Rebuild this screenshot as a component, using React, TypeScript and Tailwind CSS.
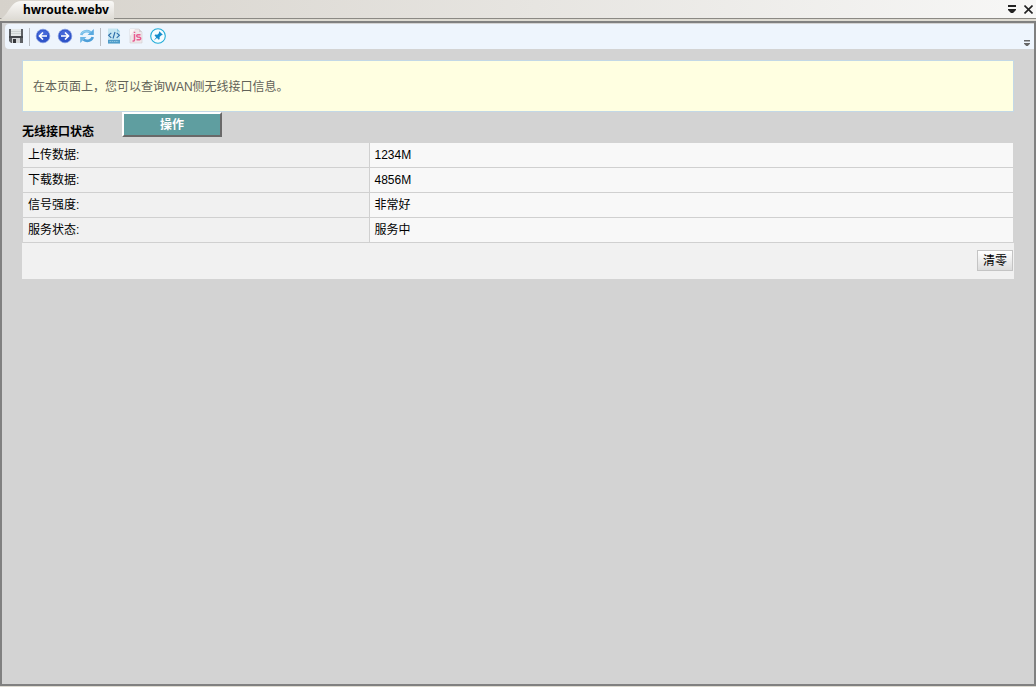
import type { ReactNode } from "react";

const rows = [
  { label: "上传数据:", value: "1234M" },
  { label: "下载数据:", value: "4856M" },
  { label: "信号强度:", value: "非常好" },
  { label: "服务状态:", value: "服务中" },
];

function SaveIcon() {
  return (
    <svg viewBox="0 0 16 16" className="w-4 h-4">
      <path d="M1 1h14v14H3l-2-2z" fill="#5d6064" />
      <path d="M3 1h10v7H3z" fill="#e4e8e8" />
      <path d="M3 3h10v1H3zM3 5h10v1H3z" fill="#cdd3d2" />
      <path d="M1 8h14v2H1z" fill="#43464a" />
      <path d="M4 10h8v5H4z" fill="#d2d5d7" />
      <path d="M5 11h3v4H5z" fill="#34363a" />
    </svg>
  );
}

function ArrowIcon({ forward }: { forward?: boolean }) {
  return (
    <svg viewBox="0 0 16 16" className="w-4 h-4">
      <circle cx="8" cy="8" r="6.8" fill="#2f54c9" stroke="#7e97df" strokeWidth="0.7" />
      <path d="M2.5 7a5.6 5.6 0 0 1 11 0q-5.500 2-11 0z" fill="#4467d8" />
      <path
        d={forward ? "M4 8h7M8 4.500l3.500 3.500L8 11.500" : "M12 8H5M8 4.500L4.500 8L8 11.500"}
        fill="none"
        stroke="#fff"
        strokeWidth="1.7"
      />
    </svg>
  );
}

function RefreshIcon() {
  return (
    <svg viewBox="0 0 16 16" className="w-4 h-4">
      <path d="M2.300 7C3 3.800 7.500 1.800 11.500 4.300" fill="none" stroke="#72bbe8" strokeWidth="2.600" />
      <path d="M14.800 1v6H8.600z" fill="#5aaae0" />
      <path d="M13.700 9C13 12.200 8.500 14.200 4.500 11.700" fill="none" stroke="#4d9fd9" strokeWidth="2.600" />
      <path d="M1.200 15V9h6.200z" fill="#6cb6e6" />
      <path d="M2.600 5.500C4.500 2.900 8 2.500 10.500 3.800" fill="none" stroke="#b2dcf4" strokeWidth="0.7" />
    </svg>
  );
}

function HtmlIcon() {
  return (
    <svg viewBox="0 0 16 16" className="w-4 h-4">
      <path d="M2 .5h9l3 3v12H2z" fill="#c5e6f2" />
      <path d="M11 .5v3h3z" fill="#8fc8e2" />
      <path d="M5.300 4.800L2.600 7.300l2.700 2.500M10.700 4.800l2.700 2.500-2.700 2.500M9 4L7 10.500" fill="none" stroke="#2b6ca8" strokeWidth="1.100" />
      <path d="M2 11.800h12V15.500H2z" fill="#4d9bc9" />
      <path d="M3.500 13.500h9" stroke="#8cc3df" strokeWidth="1" strokeDasharray="1.500 0.700" />
    </svg>
  );
}

function ScriptIcon() {
  return (
    <svg viewBox="0 0 16 16" className="w-4 h-4">
      <path d="M2 1h9l3 3v11H2z" fill="#efe7ea" stroke="#d2ced1" strokeWidth="0.6" />
      <path d="M11 1v3h3z" fill="#d5cdd1" />
      <path d="M2 1h5L2 8z" fill="#faf6f7" />
      <path d="M6.500 6v5.700q0 1.500-2 1.300M6.500 3.700v1.200M12.500 6.800H9.700q-1 0-1 1t1 1.200l2 .3q1 .2 1 1.200t-1 1.200H8.500" fill="none" stroke="#e85d91" strokeWidth="1.500" />
    </svg>
  );
}

function PinIcon() {
  return (
    <svg viewBox="0 0 16 16" className="w-4 h-4">
      <circle cx="8" cy="8" r="7.300" fill="#f5fcff" stroke="#20acd8" strokeWidth="1.100" />
      <path d="M9.300 3.300l3.500 3.500-1 .5-.5-.1-1.700 1.900.1 2-1 .7-1.700-1.700-3.200 2.400 2.400-3.200-1.700-1.700.8-1 2 .1 1.800-1.700-.2-.7z" fill="#178dcc" />
    </svg>
  );
}

function OverflowIcon({ className }: { className: string }) {
  return (
    <svg viewBox="0 0 8 8" className={className}>
      <path d="M0 0h8v2H0zM0 4h8v1L5 8H3L0 5z" fill="currentColor" />
    </svg>
  );
}

function ToolButton({ label, children }: { label: string; children: ReactNode }) {
  return (
    <button type="button" aria-label={label} className="w-4 h-4 shrink-0">
      {children}
    </button>
  );
}

function TabBar() {
  return (
    <header className="flex h-[19px] justify-between border-b border-[#8b8984] bg-linear-to-r from-[#d6d2cb] to-[#f7f7f6]">
      <div className="relative -mb-px h-[19px] w-[114px]">
        <svg viewBox="0 0 114 19" preserveAspectRatio="none" className="absolute inset-0 w-full h-full">
          <defs>
            <linearGradient id="tab" x2="0" y2="1">
              <stop stopColor="#faf9f7" />
              <stop offset="1" stopColor="#dedbd5" />
            </linearGradient>
          </defs>
          <path d="M0 19C8 17 10 1 21 1H111Q114 1 114 4V19z" fill="url(#tab)" />
        </svg>
        <h1 className="relative pl-[23px] font-['Noto_Sans',sans-serif] text-[12px] leading-[19px] font-bold whitespace-nowrap text-black">
          hwroute.webv
        </h1>
      </div>
      <div className="flex items-center gap-2 pr-[3px] text-[#222]">
        <button type="button" aria-label="窗口列表">
          <OverflowIcon className="w-2 h-2" />
        </button>
        <button type="button" aria-label="关闭">
          <svg viewBox="0 0 9 9" className="w-[9px] h-[9px]">
            <path d="M.5.5l8 8M8.500.5l-8 8" stroke="currentColor" strokeWidth="1.600" />
          </svg>
        </button>
      </div>
    </header>
  );
}

function Toolbar() {
  return (
    <div className="mt-px ml-[3px] flex h-[25px] items-start rounded-l bg-[#eef5fd] pt-1 pl-[3px]">
      <ToolButton label="保存"><SaveIcon /></ToolButton>
      <span className="mx-[5px] h-[18px] w-px bg-[#b9bdc3]" />
      <div className="flex gap-[6px]">
        <ToolButton label="后退"><ArrowIcon /></ToolButton>
        <ToolButton label="前进"><ArrowIcon forward /></ToolButton>
        <ToolButton label="刷新"><RefreshIcon /></ToolButton>
      </div>
      <span className="mx-[5px] h-[18px] w-px bg-[#b9bdc3]" />
      <div className="flex gap-[6px]">
        <ToolButton label="HTML"><HtmlIcon /></ToolButton>
        <ToolButton label="脚本"><ScriptIcon /></ToolButton>
        <ToolButton label="固定"><PinIcon /></ToolButton>
      </div>
      <button type="button" aria-label="更多" className="ml-auto mr-1 self-end pb-[3px] text-[#666]">
        <OverflowIcon className="w-[6px] h-[6px]" />
      </button>
    </div>
  );
}

export default function App() {
  return (
    <div className="flex min-h-screen flex-col bg-[#dedbd2] font-['Liberation_Sans','Noto_Sans_CJK_SC',sans-serif] text-[12px] text-black">
      <TabBar />
      <div className="mt-[2px] mb-px flex flex-1 flex-col border-2 border-[#808080] bg-[#d3d3d3]">
        <Toolbar />
        <main className="mt-[11px] px-5">
          <p className="border border-[#c3d8e6] bg-[#ffffe1] px-[10px] pt-[17px] pb-[15px] leading-[18px] text-[#626258]">
            在本页面上，您可以查询WAN侧无线接口信息。
          </p>
          <div className="flex h-[31px] items-start gap-7">
            <h2 className="pt-[11px] leading-[18px] font-bold">无线接口状态</h2>
            <button
              type="button"
              className="h-[25px] w-[100px] border-2 border-t-white border-r-[#696969] border-b-[#696969] border-l-white bg-[#5f9ea0] leading-[18px] font-bold text-white"
            >
              操作
            </button>
          </div>
          <div className="mx-px">
            <table className="w-full table-fixed border-separate border-spacing-0">
              <tbody>
                {rows.map((row) => (
                  <tr key={row.label} className="h-[25px]">
                    <th scope="row" className="w-[35%] border-r border-b border-[#d0d0d0] bg-[#f1f1f1] px-[5px] text-left leading-[18px] font-normal">
                      {row.label}
                    </th>
                    <td className="border-b border-[#d0d0d0] bg-[#f8f8f8] px-[5px] leading-[18px]">{row.value}</td>
                  </tr>
                ))}
              </tbody>
            </table>
          </div>
          <div className="flex h-9 justify-end bg-[#f1f1f1] pt-[7px] pr-px">
            <button
              type="button"
              className="h-[21px] w-9 border border-[#c4c4c4] bg-linear-to-b from-white to-[#dcdcdc] leading-[18px]"
            >
              清零
            </button>
          </div>
        </main>
      </div>
    </div>
  );
}
